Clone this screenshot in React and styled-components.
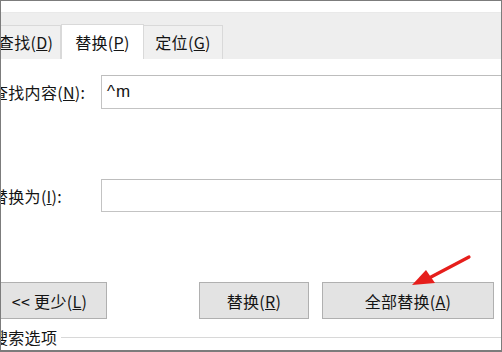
import React from 'react';
import styled, { createGlobalStyle } from 'styled-components';

const GlobalStyle = createGlobalStyle`
    html, body {
        margin: 0;
        padding: 0;
        background: #ffffff;
    }
    body {
        font-family: 'Noto Sans CJK SC', 'Noto Sans', sans-serif;
        color: #141414;
    }
`;

const Frame = styled.div`
    position: relative;
    width: 502px;
    height: 352px;
    box-sizing: border-box;
    border: 1px solid #7c7c7c;
    border-bottom-width: 2px;
    background: #ffffff;
    overflow: hidden;
    font-size: 16px;
    letter-spacing: 0.3px;
`;

const TopGap = styled.div`
    height: 11px;
    background: #ffffff;
`;

const TabStrip = styled.div`
    height: 47px;
    background: #eeeeee;
    border-top: 1px solid #e9e9e9;
    box-sizing: border-box;
    display: flex;
    align-items: flex-end;
    margin-left: -10px;
`;

const Tab = styled.div`
    width: ${(p) => p.width}px;
    height: ${(p) => (p.active ? 35 : 34)}px;
    box-sizing: border-box;
    display: flex;
    align-items: center;
    justify-content: center;
    background: ${(p) => (p.active ? '#ffffff' : '#f0f0f0')};
    border: 1px solid #d9d9d9;
    border-bottom: none;
    margin-left: ${(p) => (p.active ? 0 : -1)}px;
    padding-bottom: 1px;
    position: relative;
    z-index: ${(p) => (p.active ? 1 : 0)};
    white-space: nowrap;
`;

const Body = styled.div`
    margin-left: -9px;
    padding-top: 16px;
    display: flex;
    flex-direction: column;
`;

const FieldRow = styled.div`
    display: grid;
    grid-template-columns: 109px 430px;
    align-items: center;
    margin-bottom: ${(p) => p.gap}px;
`;

const Label = styled.label`
    white-space: nowrap;
`;

const Input = styled.div`
    height: ${(p) => p.h}px;
    box-sizing: border-box;
    border: 1px solid #c3c3c3;
    border-top-color: #bdbdbd;
    display: flex;
    align-items: center;
    padding-left: 5px;
    font-family: 'Liberation Sans', 'Noto Sans', sans-serif;
    font-size: 17px;
    letter-spacing: 1px;
`;

const ButtonRow = styled.div`
    display: flex;
    align-items: center;
    height: 37px;
`;

const Button = styled.div`
    width: ${(p) => p.width}px;
    margin-left: ${(p) => p.offset}px;
    height: 37px;
    box-sizing: border-box;
    background: #e3e3e3;
    border: 1px solid #b0b0b0;
    display: flex;
    align-items: center;
    justify-content: center;
    white-space: nowrap;
`;

const OptionsRow = styled.div`
    margin-top: 8px;
    height: 20px;
    display: flex;
    align-items: center;
    gap: 4px;
`;

const OptionsRule = styled.div`
    flex: 1;
    height: 1px;
    background: #d8d8d8;
    margin-top: 1px;
`;

const Arrow = styled.svg`
    position: absolute;
    left: 400px;
    top: 248px;
    width: 80px;
    height: 45px;
`;

function App() {
    return (
        <>
            <GlobalStyle />
            <Frame>
                <TopGap />
                <TabStrip>
                    <Tab width={71}>
                        查找(<u>D</u>)
                    </Tab>
                    <Tab width={83} active>
                        替换(<u>P</u>)
                    </Tab>
                    <Tab width={80}>
                        定位(<u>G</u>)
                    </Tab>
                </TabStrip>
                <Body>
                    <FieldRow gap={70}>
                        <Label>
                            查找内容(<u>N</u>):
                        </Label>
                        <Input h={34}>^m</Input>
                    </FieldRow>
                    <FieldRow gap={70}>
                        <Label>
                            替换为(<u>I</u>):
                        </Label>
                        <Input h={33} />
                    </FieldRow>
                    <ButtonRow>
                        <Button width={115} offset={0}>
                            &lt;&lt; 更少(<u>L</u>)
                        </Button>
                        <Button width={110} offset={92}>
                            替换(<u>R</u>)
                        </Button>
                        <Button width={172} offset={13}>
                            全部替换(<u>A</u>)
                        </Button>
                    </ButtonRow>
                    <OptionsRow>
                        <span>搜索选项</span>
                        <OptionsRule />
                    </OptionsRow>
                </Body>
                <Arrow viewBox="0 0 80 45">
                    <path d="M68 8 L30 28" stroke="#e61e1b" strokeWidth="3.2" strokeLinecap="round" fill="none" />
                    <path d="M11 36 L25 21 L34 34 Z" fill="#e61e1b" />
                </Arrow>
            </Frame>
        </>
    );
}

export default App;
